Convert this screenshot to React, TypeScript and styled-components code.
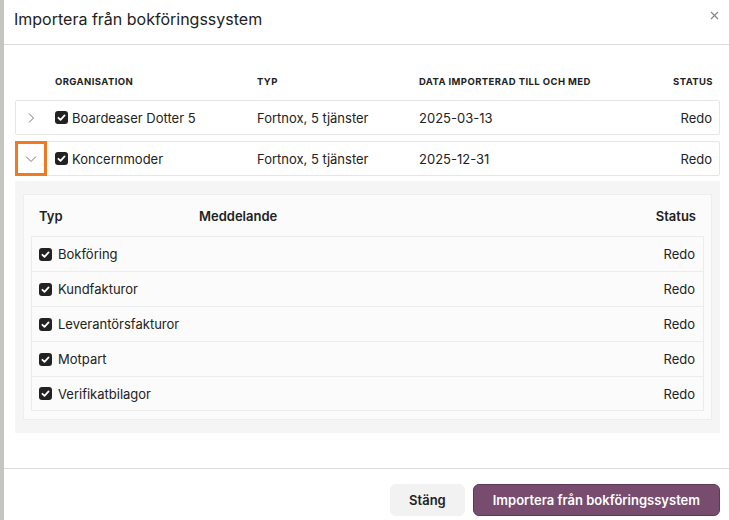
import React from 'react'
import styled, { createGlobalStyle } from 'styled-components'

const GlobalStyle = createGlobalStyle`
    html, body {
        margin: 0;
        padding: 0;
        background: #ffffff;
    }
    body {
        font-family: Inter, 'Noto Sans', sans-serif;
        color: #222;
    }
`

const Screen = styled.div`
    display: flex;
    width: 729px;
    height: 520px;
    overflow: hidden;
`

const Backdrop = styled.div`
    width: 4px;
    flex-shrink: 0;
    background: #c4c4c1;
`

const Modal = styled.div`
    flex: 1;
    display: flex;
    flex-direction: column;
    background: #fff;
`

const Header = styled.div`
    height: 44px;
    display: flex;
    align-items: center;
    justify-content: space-between;
    padding: 0 9px 0 10px;
    border-bottom: 1px solid #dcdcdc;
    box-sizing: content-box;
`

const Title = styled.h1`
    margin: 0;
    margin-top: -7px;
    font-size: 16px;
    font-weight: 400;
    color: #222;
`

const Close = styled.button`
    border: none;
    background: none;
    padding: 0;
    margin-top: -14px;
    width: 12px;
    height: 12px;
    display: flex;
    align-items: center;
    justify-content: center;
    cursor: pointer;
`

const Body = styled.div`
    padding: 22px 9px 0 11px;
    height: 424px;
    box-sizing: border-box;
    border-bottom: 1px solid #dcdcdc;
`

const cols = '31px 210px 162px 1fr auto'

const HeadRow = styled.div`
    display: grid;
    grid-template-columns: ${cols};
    align-items: center;
    height: 28px;
    margin-bottom: 5px;
    padding: 0 7px 0 1px;
    font-size: 9.5px;
    font-weight: 700;
    letter-spacing: 0.4px;
    text-transform: uppercase;
    color: #222;
`

const HeadCell = styled.div<{ $indent?: number; $right?: boolean }>`
    padding-left: ${(p) => p.$indent ?? 0}px;
    text-align: ${(p) => (p.$right ? 'right' : 'left')};
`

const Row = styled.div`
    display: grid;
    grid-template-columns: ${cols};
    align-items: center;
    height: 35px;
    box-sizing: border-box;
    border: 1px solid #e6e6e6;
    border-radius: 2px;
    padding-right: 7px;
    margin-bottom: 6px;
    font-size: 13px;
    color: #222;
`

const Toggle = styled.div<{ $focused?: boolean }>`
    align-self: stretch;
    margin: -1px 0 -1px -1px;
    display: flex;
    align-items: center;
    justify-content: center;
    box-sizing: border-box;
    border: 3px solid ${(p) => (p.$focused ? '#f07a22' : 'transparent')};
`

const Cell = styled.div<{ $indent?: number; $right?: boolean; $gap?: number }>`
    display: flex;
    align-items: center;
    gap: ${(p) => p.$gap ?? 4}px;
    padding-left: ${(p) => p.$indent ?? 0}px;
    justify-content: ${(p) => (p.$right ? 'flex-end' : 'flex-start')};
    white-space: nowrap;
`

const Panel = styled.div`
    background: #f5f5f5;
    padding: 13px 8px;
    margin-top: -1px;
`

const Card = styled.div`
    background: #fbfbfb;
    border: 1px solid #eeeeee;
    padding: 0 7px 8px;
`

const SubHead = styled.div`
    display: grid;
    grid-template-columns: 160px 1fr auto;
    align-items: center;
    height: 41px;
    padding: 0 8px;
    font-size: 13px;
    font-weight: 600;
    color: #222;
`

const SubRow = styled.div`
    display: grid;
    grid-template-columns: 160px 1fr auto;
    align-items: center;
    height: 35px;
    box-sizing: border-box;
    padding: 0 8px 0 7px;
    border: 1px solid #ececec;
    border-bottom: none;
    font-size: 13px;
    color: #222;

    &:last-child {
        border-bottom: 1px solid #ececec;
    }
`

const Footer = styled.div`
    display: flex;
    justify-content: flex-end;
    gap: 8px;
    padding: 15px 9px 0 0;
`

const Button = styled.button<{ $primary?: boolean }>`
    height: 32px;
    box-sizing: border-box;
    border-radius: 6px;
    font-family: Inter, 'Noto Sans', sans-serif;
    font-size: 13px;
    font-weight: 600;
    cursor: pointer;
    padding: 0 ${(p) => (p.$primary ? 19 : 18)}px;
    border: 1px solid ${(p) => (p.$primary ? '#5d3957' : '#f2f2f2')};
    background: ${(p) => (p.$primary ? '#774c6f' : '#f2f2f2')};
    color: ${(p) => (p.$primary ? '#fff' : '#222')};
`

const Check = () => (
    <svg width="13" height="13" viewBox="0 0 13 13">
        <rect x="0" y="0" width="13" height="13" rx="3" fill="#222" />
        <path d="M3.4 6.8 L5.5 8.8 L9.6 4.4" fill="none" stroke="#fff" strokeWidth="1.8" strokeLinecap="round" strokeLinejoin="round" />
    </svg>
)

const ChevronRight = () => (
    <svg width="8" height="12" viewBox="0 0 8 12">
        <path d="M2 1.5 L6.5 6 L2 10.5" fill="none" stroke="#777" strokeWidth="1" />
    </svg>
)

const ChevronDown = () => (
    <svg width="12" height="8" viewBox="0 0 12 8">
        <path d="M1 1.5 L6 6.5 L11 1.5" fill="none" stroke="#777" strokeWidth="1" />
    </svg>
)

const orgs = [
    { name: 'Boardeaser Dotter 5', typ: 'Fortnox, 5 tjänster', date: '2025-03-13', open: false },
    { name: 'Koncernmoder', typ: 'Fortnox, 5 tjänster', date: '2025-12-31', open: true },
]

const services = ['Bokföring', 'Kundfakturor', 'Leverantörsfakturor', 'Motpart', 'Verifikatbilagor']

export default function App() {
    return (
        <>
            <GlobalStyle />
            <Screen>
                <Backdrop />
                <Modal>
                    <Header>
                        <Title>Importera från bokföringssystem</Title>
                        <Close aria-label="Stäng">
                            <svg width="9" height="9" viewBox="0 0 9 9">
                                <path d="M1 1 L8 8 M8 1 L1 8" stroke="#888" strokeWidth="1.2" />
                            </svg>
                        </Close>
                    </Header>
                    <Body>
                        <HeadRow>
                            <span />
                            <HeadCell $indent={8}>Organisation</HeadCell>
                            <HeadCell>Typ</HeadCell>
                            <HeadCell>Data importerad till och med</HeadCell>
                            <HeadCell $right>Status</HeadCell>
                        </HeadRow>
                        {orgs.map((o) => (
                            <React.Fragment key={o.name}>
                                <Row>
                                    <Toggle $focused={o.open}>{o.open ? <ChevronDown /> : <ChevronRight />}</Toggle>
                                    <Cell $indent={8}>
                                        <Check />
                                        {o.name}
                                    </Cell>
                                    <Cell>{o.typ}</Cell>
                                    <Cell>{o.date}</Cell>
                                    <Cell $right>Redo</Cell>
                                </Row>
                                {o.open && (
                                    <Panel>
                                        <Card>
                                            <SubHead>
                                                <span>Typ</span>
                                                <span>Meddelande</span>
                                                <span>Status</span>
                                            </SubHead>
                                            {services.map((s) => (
                                                <SubRow key={s}>
                                                    <Cell $gap={6}>
                                                        <Check />
                                                        {s}
                                                    </Cell>
                                                    <span />
                                                    <Cell $right>Redo</Cell>
                                                </SubRow>
                                            ))}
                                        </Card>
                                    </Panel>
                                )}
                            </React.Fragment>
                        ))}
                    </Body>
                    <Footer>
                        <Button>Stäng</Button>
                        <Button $primary>Importera från bokföringssystem</Button>
                    </Footer>
                </Modal>
            </Screen>
        </>
    )
}
